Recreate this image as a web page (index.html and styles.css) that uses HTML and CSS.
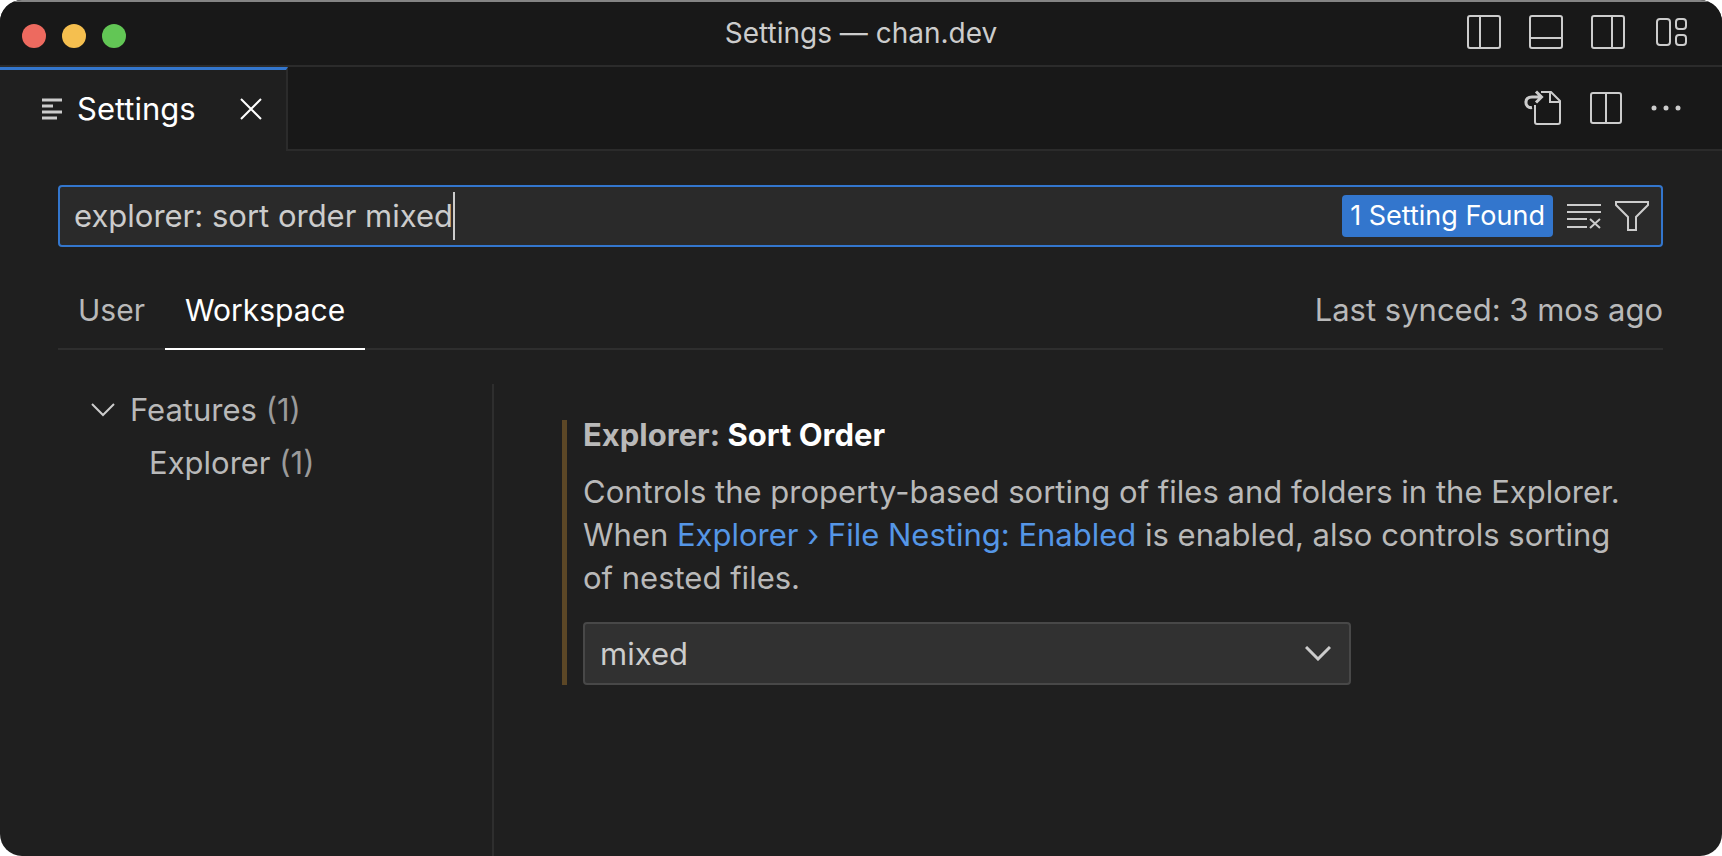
FILE: index.html
```html
<!DOCTYPE html>
<html lang="en">
<head>
<meta charset="utf-8">
<title>Settings — chan.dev</title>
<link rel="stylesheet" href="styles.css">
</head>
<body>
<div class="window">
  <header class="titlebar">
    <div class="lights">
      <button class="light light-close" aria-label="Close window"></button>
      <button class="light light-min" aria-label="Minimize window"></button>
      <button class="light light-max" aria-label="Zoom window"></button>
    </div>
    <h1 class="window-title">Settings — chan.dev</h1>
    <div class="layout-actions">
      <button class="icon-button" aria-label="Toggle primary side bar">
        <svg width="34" height="34" viewBox="0 0 34 34"><rect x="1" y="1" width="32" height="32" rx="2"/><path d="M13 1v32"/></svg>
      </button>
      <button class="icon-button" aria-label="Toggle panel">
        <svg width="34" height="34" viewBox="0 0 34 34"><rect x="1" y="1" width="32" height="32" rx="2"/><path d="M1 23h32"/></svg>
      </button>
      <button class="icon-button" aria-label="Toggle secondary side bar">
        <svg width="34" height="34" viewBox="0 0 34 34"><rect x="1" y="1" width="32" height="32" rx="2"/><path d="M21 1v32"/></svg>
      </button>
      <button class="icon-button" aria-label="Customize layout">
        <svg width="34" height="34" viewBox="0 0 34 34"><rect x="4" y="4" width="13" height="26" rx="3"/><rect x="23" y="4" width="10" height="10" rx="3"/><rect x="23" y="20" width="10" height="10" rx="3"/></svg>
      </button>
    </div>
  </header>

  <div class="tabbar">
    <div class="editor-tab">
      <svg class="heavy" width="20" height="22" viewBox="0 0 20 22"><path d="M0 2h20M0 8h11M0 14h20M0 20h15"/></svg>
      <span class="editor-tab-name">Settings</span>
      <button class="icon-button" aria-label="Close tab">
        <svg class="bright" width="22" height="22" viewBox="0 0 22 22"><path d="M1 1l20 20M21 1L1 21"/></svg>
      </button>
    </div>
    <div class="editor-actions">
      <button class="icon-button" aria-label="Open settings (JSON)">
        <svg width="37" height="36" viewBox="0 0 37 36"><path d="M17 2h10l9 9v21a2 2 0 0 1-2 2H13a2 2 0 0 1-2-2V15M26 2v10h10"/><path class="heavy" d="M8 17.500a5 5 0 0 1-6-5.500q0-5 6-5h9M12 1.500l5.500 5.500-5.500 5.500"/></svg>
      </button>
      <button class="icon-button" aria-label="Split editor">
        <svg width="32" height="32" viewBox="0 0 32 32"><rect x="1" y="1" width="30" height="30" rx="2"/><path d="M16 1v30"/></svg>
      </button>
      <button class="icon-button" aria-label="More actions">
        <svg class="solid" width="30" height="6" viewBox="0 0 30 6"><circle cx="3" cy="3" r="2.5"/><circle cx="15" cy="3" r="2.5"/><circle cx="27" cy="3" r="2.5"/></svg>
      </button>
    </div>
  </div>

  <main class="settings">
    <div class="search">
      <input class="search-input" type="text" aria-label="Search settings" value="explorer: sort order mixed">
      <span class="caret"></span>
      <span class="found">1 Setting Found</span>
      <button class="icon-button" aria-label="Clear settings search input">
        <svg width="34" height="26" viewBox="0 0 34 26"><path d="M0 2h34M0 9h34M0 16h20M0 24h20M23 16l10 9M33 16l-10 9"/></svg>
      </button>
      <button class="icon-button" aria-label="Filter settings">
        <svg width="34" height="30" viewBox="0 0 34 30"><path d="M1 1h32v3L21 16v13h-8V16L1 4z"/></svg>
      </button>
    </div>

    <div class="scopes">
      <button class="scope">User</button>
      <button class="scope scope-active">Workspace</button>
      <span class="synced">Last synced: 3 mos ago</span>
    </div>

    <div class="body">
      <nav class="toc">
        <a class="toc-row" href="#features">
          <svg width="24" height="14" viewBox="0 0 24 14"><path d="M1 1l11 11L23 1"/></svg>
          <span>Features <span class="count">(1)</span></span>
        </a>
        <a class="toc-row toc-child" href="#explorer">
          <span>Explorer <span class="count">(1)</span></span>
        </a>
      </nav>
      <section class="results">
        <article class="setting">
          <h2 class="setting-title"><label for="sort-order"><span class="category">Explorer:</span> Sort Order</label></h2>
          <p class="description">Controls the property-based sorting of files and folders in the Explorer. When <a class="link" href="#nesting">Explorer › File Nesting: Enabled</a> is enabled, also controls sorting of nested files.</p>
          <div class="select-box">
            <select class="select" id="sort-order">
              <option>default</option>
              <option selected>mixed</option>
              <option>filesFirst</option>
              <option>type</option>
              <option>modified</option>
            </select>
            <svg class="select-arrow" width="26" height="15" viewBox="0 0 26 15"><path d="M1 1l12 12L25 1"/></svg>
          </div>
        </article>
      </section>
    </div>
  </main>
</div>
</body>
</html>
```
FILE: styles.css
```css
* { box-sizing: border-box; }

body {
  margin: 0;
  background: #fff;
  color: #ccc;
  font-family: Inter, "Liberation Sans", sans-serif;
  font-size: 31px;
  line-height: 43px;
}

button, input, select { font: inherit; color: inherit; }
a { color: inherit; text-decoration: none; }

svg {
  display: block;
  flex: none;
  fill: none;
  stroke: #ccc;
  stroke-width: 2;
}
.heavy { stroke-width: 3; }
svg.bright { stroke: #fff; }
svg.solid { fill: #ccc; stroke: none; }

.window {
  display: flex;
  flex-direction: column;
  min-height: 100vh;
  overflow: hidden;
  background: #1f1f1f;
  border-radius: 22px;
}

.icon-button {
  padding: 0;
  border: 0;
  background: none;
}

.titlebar {
  display: grid;
  grid-template-columns: 1fr auto 1fr;
  align-items: center;
  height: 67px;
  padding: 0 22px 3px;
  background: #181818;
  border-top: 2px solid #848484;
  border-bottom: 2px solid #2b2b2b;
}
.lights { display: flex; gap: 16px; padding-top: 8px; }
.light {
  width: 24px;
  height: 24px;
  padding: 0;
  border: 0;
  border-radius: 50%;
}
.light-close { background: #ed6a5f; }
.light-min { background: #f5bf4f; }
.light-max { background: #62c655; }
.window-title {
  margin: 0;
  padding-top: 2px;
  font-size: 28px;
  font-weight: 400;
}
.layout-actions {
  display: flex;
  justify-content: flex-end;
  gap: 28px;
  padding-right: 13px;
}

.tabbar {
  display: flex;
  justify-content: space-between;
  height: 84px;
  background: #181818;
  box-shadow: inset 0 -2px #2b2b2b;
}
.editor-tab {
  display: flex;
  align-items: center;
  padding: 0 24px 3px 42px;
  background: #1f1f1f;
  border-top: 3px solid #3376cd;
  border-right: 2px solid #2b2b2b;
  color: #fff;
}
.editor-tab-name { margin: 0 44px 0 15px; padding-bottom: 2px; }
.editor-actions {
  display: flex;
  align-items: center;
  gap: 29px;
  padding: 0 41px 2px 0;
}

.settings {
  display: flex;
  flex-direction: column;
  flex: 1;
  padding: 34px 59px 0 58px;
}

.search {
  display: flex;
  align-items: center;
  height: 62px;
  padding-right: 12px;
  background: #2a2a2a;
  border: 2px solid #3376cd;
  border-radius: 4px;
}
.search-input {
  field-sizing: content;
  min-width: 0;
  padding: 0 0 2px 14px;
  border: 0;
  outline: 0;
  background: none;
}
.caret { width: 2px; height: 48px; background: #ccc; }
.found {
  margin-left: auto;
  padding: 0 8px;
  border-radius: 4px;
  background: #3376cd;
  color: #fff;
  font-size: 27px;
  line-height: 42px;
}
.search .icon-button { margin-left: 14px; }

.scopes {
  display: flex;
  height: 103px;
  padding-top: 28px;
  border-bottom: 2px solid #2e2e2e;
  color: #b9b9b9;
}
.scope {
  height: 75px;
  padding: 0 20px 2px;
  border: 0;
  border-bottom: 2px solid transparent;
  background: none;
  font-size: 30px;
}
.scope-active { border-color: #fff; color: #fff; }
.synced { margin-left: auto; font-size: 31px; line-height: 70px; }

.body {
  display: flex;
  flex: 1;
  padding-top: 34px;
}
.toc {
  flex: none;
  width: 436px;
  border-right: 2px solid #2e2e2e;
  color: #b9b9b9;
}
.toc-row {
  display: flex;
  align-items: center;
  gap: 15px;
  height: 53px;
  padding: 0 0 2px 33px;
}
.toc-child { padding-left: 91px; }
.count { color: #9a9a9a; }

.results {
  flex: 1;
  padding: 36px 36px 0 68px;
}
.setting {
  padding-left: 16px;
  border-left: 5px solid #5c4726;
}
.setting-title {
  margin: 0;
  padding-bottom: 10px;
  color: #fff;
  font-size: 31px;
  font-weight: 700;
  line-height: 30px;
}
.category { color: #b9b9b9; }
.description {
  margin: 0;
  padding: 10px 0 23px;
  color: #b9b9b9;
}
.link { color: #5596e6; }
.select-box {
  position: relative;
  max-width: 768px;
}
.select {
  display: block;
  width: 100%;
  height: 63px;
  padding: 0 60px 0 15px;
  appearance: none;
  background: #313131;
  border: 2px solid #484848;
  border-radius: 4px;
}
.select-arrow {
  position: absolute;
  top: 24px;
  right: 20px;
  stroke-width: 3;
  pointer-events: none;
}
```
